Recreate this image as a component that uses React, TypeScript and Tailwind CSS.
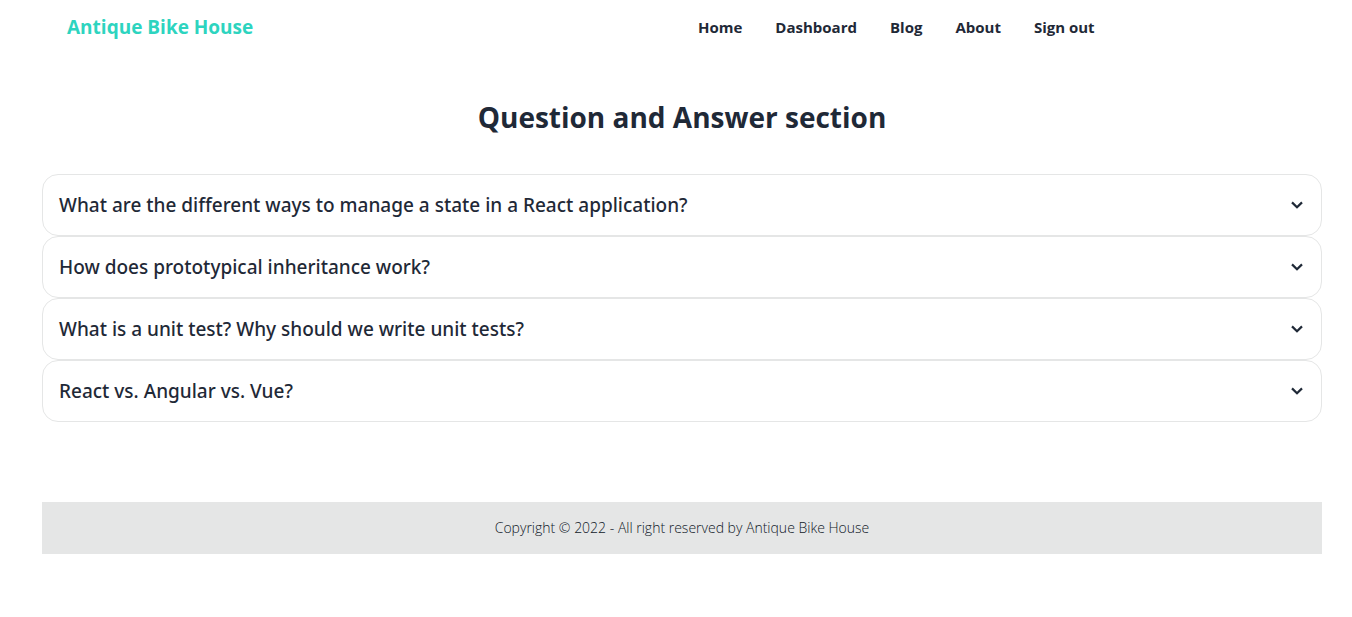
import React from "react";

const links = ["Home", "Dashboard", "Blog", "About", "Sign out"];
const questions = [
  "What are the different ways to manage a state in a React application?",
  "How does prototypical inheritance work?",
  "What is a unit test? Why should we write unit tests?",
  "React vs. Angular vs. Vue?",
];

function Chevron() {
  return (
    <svg className="size-4 shrink-0" viewBox="0 0 16 16" fill="none" stroke="currentColor" strokeWidth="2.2" aria-hidden="true">
      <path d="M3 5.4 8 10.3 13 5.4" />
    </svg>
  );
}

export default function App() {
  return (
    <div className="pr-[30px] pl-[42px] font-['Open_Sans','Noto_Sans',sans-serif] text-[#1f2937]">
      <header className="flex h-[54px] items-center">
        <div className="w-1/2 pl-[25px]">
          <a href="#" className="text-[19px] font-bold text-[#2dd4bf]">Antique Bike House</a>
        </div>
        <nav className="flex gap-[33px] px-4">
          {links.map((l) => (
            <a key={l} href="#" className="text-[15px] leading-5 font-bold">{l}</a>
          ))}
        </nav>
      </header>
      <main>
        <h1 className="mt-11 text-center text-[28px] leading-[38px] font-bold">Question and Answer section</h1>
        <div className="mt-[38px]">
          {questions.map((q) => (
            <button key={q} type="button" className="flex h-[62px] w-full items-center justify-between rounded-2xl border border-[#e5e6e6] px-4 text-left font-['Noto_Sans','Open_Sans',sans-serif] text-[19px] font-medium">
              {q}
              <Chevron />
            </button>
          ))}
        </div>
      </main>
      <footer className="mt-20 bg-[#e5e6e6] p-4 text-center text-sm font-light text-gray-900">
        <p>Copyright © 2022 - All right reserved by Antique Bike House</p>
      </footer>
    </div>
  );
}
